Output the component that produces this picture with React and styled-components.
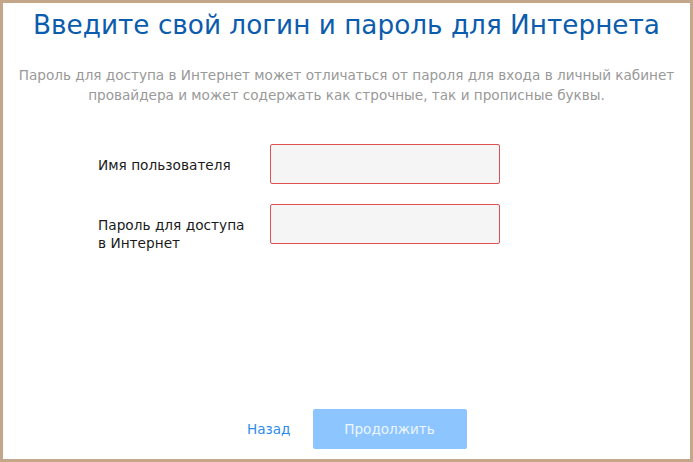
import React from "react";
import styled, { createGlobalStyle } from "styled-components";

const Global = createGlobalStyle`
  html, body { margin: 0; padding: 0; background: #fff; }
  * { box-sizing: border-box; }
`;

const Frame = styled.div`
  width: 693px;
  height: 462px;
  border: 3px solid #c4a68b;
  background: #fff;
  display: flex;
  flex-direction: column;
  font-family: "DejaVu Sans", Verdana, sans-serif;
`;

const Title = styled.h1`
  margin: 6px 0 0;
  font-size: 26.3px;
  line-height: 32px;
  font-weight: normal;
  color: #0b5cad;
  text-align: center;
`;

const Description = styled.p`
  margin: 24px 0 0;
  font-size: 13.6px;
  line-height: 20px;
  color: #999;
  text-align: center;
`;

const Form = styled.div`
  margin: 39px 0 0 95px;
  display: grid;
  grid-template-columns: 172px 230px;
  row-gap: 20px;
`;

const Label = styled.label`
  font-size: 13.7px;
  line-height: 18px;
  color: #1a1a1a;
  padding-top: ${(p) => p.$pt}px;
`;

const Input = styled.input`
  width: 230px;
  height: 40px;
  border: 1px solid #e05252;
  border-radius: 2px;
  background: #f5f5f5;
  outline: none;
`;

const Footer = styled.div`
  margin-top: auto;
  margin-bottom: 10px;
  padding-left: 244px;
  display: flex;
  align-items: center;
  gap: 22px;
`;

const BackLink = styled.a`
  font-size: 13.6px;
  color: #2d8ceb;
  text-decoration: none;
  cursor: pointer;
`;

const NextButton = styled.button`
  width: 154px;
  height: 40px;
  border: none;
  border-radius: 2px;
  background: #8cc5ff;
  color: #eef6ff;
  font-family: inherit;
  font-size: 13.6px;
`;

export default function App() {
  return (
    <>
      <Global />
      <Frame>
        <Title>Введите свой логин и пароль для Интернета</Title>
        <Description>
          Пароль для доступа в Интернет может отличаться от пароля для входа в личный кабинет
          <br />
          провайдера и может содержать как строчные, так и прописные буквы.
        </Description>
        <Form>
          <Label $pt={12}>Имя пользователя</Label>
          <Input type="text" />
          <Label $pt={12}>
            Пароль для доступа
            <br />
            в Интернет
          </Label>
          <Input type="password" />
        </Form>
        <Footer>
          <BackLink>Назад</BackLink>
          <NextButton disabled>Продолжить</NextButton>
        </Footer>
      </Frame>
    </>
  );
}
